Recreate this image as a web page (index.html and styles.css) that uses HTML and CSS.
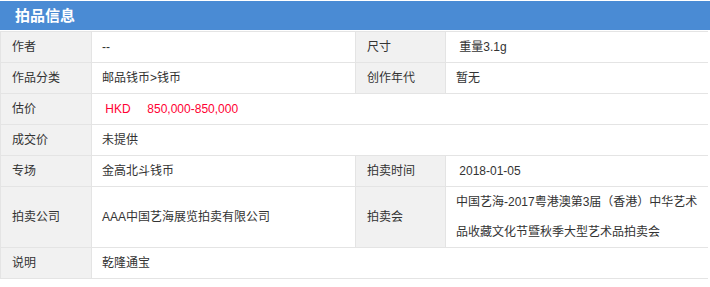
FILE: index.html
```html
<!DOCTYPE html>
<html lang="zh-CN">
<head>
<meta charset="utf-8">
<title>拍品信息</title>
<link rel="stylesheet" href="styles.css">
</head>
<body>
<section class="panel">
  <h2 class="panel-title">拍品信息</h2>
  <div class="info-grid">
    <div class="label">作者</div>
    <div class="value">--</div>
    <div class="label">尺寸</div>
    <div class="value">&nbsp;重量3.1g</div>

    <div class="label">作品分类</div>
    <div class="value">邮品钱币&gt;钱币</div>
    <div class="label">创作年代</div>
    <div class="value">暂无</div>

    <div class="label">估价</div>
    <div class="value wide price">&nbsp;HKD&nbsp;&nbsp;&nbsp;&nbsp;&nbsp;850,000-850,000</div>

    <div class="label">成交价</div>
    <div class="value wide">未提供</div>

    <div class="label">专场</div>
    <div class="value">金高北斗钱币</div>
    <div class="label">拍卖时间</div>
    <div class="value">&nbsp;2018-01-05</div>

    <div class="label">拍卖公司</div>
    <div class="value">AAA中国艺海展览拍卖有限公司</div>
    <div class="label">拍卖会</div>
    <div class="value multi">中国艺海-2017粤港澳第3届（香港）中华艺术品收藏文化节暨秋季大型艺术品拍卖会</div>

    <div class="label">说明</div>
    <div class="value wide">乾隆通宝</div>
  </div>
</section>
</body>
</html>
```

FILE: styles.css
```css
html, body {
  margin: 0;
  padding: 0;
  background: #ffffff;
}

body {
  font-family: "Liberation Sans", "Noto Sans CJK SC", Arial, sans-serif;
  font-size: 12px;
  color: #333333;
}

.panel {
  width: 710px;
}

.panel-title {
  margin: 1px 0 1px 0;
  height: 29px;
  line-height: 29px;
  padding-left: 15px;
  background: #4a8bd4;
  color: #ffffff;
  font-size: 15px;
  font-weight: bold;
}

.info-grid {
  display: grid;
  grid-template-columns: 90px 263px 89px 262px;
  gap: 1px;
  padding: 1px;
  width: 706px;
  background: #e4e4e4;
}

.label,
.value {
  line-height: 30px;
  min-height: 30px;
  display: flex;
  align-items: center;
}

.label {
  background: #f1f1f1;
  padding-left: 11px;
}

.value {
  background: #ffffff;
  padding: 0 10px;
}

.wide {
  grid-column: 2 / span 3;
}

.price {
  color: #ff0033;
}

.multi {
  display: block;
  padding-right: 9px;
}
```
